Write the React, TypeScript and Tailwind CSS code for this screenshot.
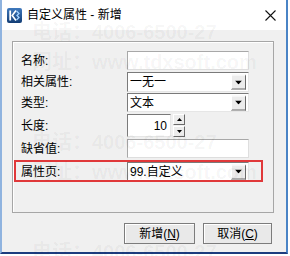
import React from "react";

const FONT = '"Liberation Sans", "Noto Sans CJK SC", sans-serif';

function DropBtn() {
  return (
    <div className="absolute right-[2px] top-1/2 -translate-y-1/2 w-[15px] h-[15px] bg-[#ececec] border border-t-white border-l-white border-b-[#6a6a6a] border-r-[#6a6a6a] flex items-center justify-center">
      <svg width="7" height="4" viewBox="0 0 7 4">
        <polygon points="0,0 7,0 3.5,4" fill="#000" />
      </svg>
    </div>
  );
}

function Combo({ text, className = "" }: { text: string; className?: string }) {
  return (
    <div
      className={
        "relative w-[122px] h-full bg-white border border-t-[#7a7a7a] border-l-[#7a7a7a] border-b-[#e6e6e6] border-r-[#e6e6e6] flex items-center pl-[2px] text-[12px] text-black " +
        className
      }
    >
      <span className="leading-none">{text}</span>
      <DropBtn />
    </div>
  );
}

function Input() {
  return (
    <div className="w-[122px] h-full bg-white border border-t-[#a8a8a8] border-l-[#a8a8a8] border-b-[#dedede] border-r-[#dedede]" />
  );
}

function Row({
  label,
  children,
  className = "",
}: {
  label: string;
  children: React.ReactNode;
  className?: string;
}) {
  return (
    <div className={"relative flex items-center " + className}>
      <div className="w-[106px] text-[12px] text-black leading-none">{label}</div>
      {children}
    </div>
  );
}

export default function App() {
  return (
    <div
      className="relative w-[290px] h-[256px] bg-white overflow-hidden"
      style={{ fontFamily: FONT }}
    >
      <div className="w-[288px] h-[254px] flex flex-col border-l-2 border-l-[#8fb3df] border-r-2 border-r-[#4a84c6] border-b-2 border-b-[#1c3c7e]">
        {/* title bar */}
        <div className="h-[30px] bg-white flex items-center pl-[5px] pr-[10px]">
          <svg width="15" height="15" viewBox="0 0 15 15">
            <defs>
              <linearGradient id="g" x1="0" y1="0" x2="0" y2="1">
                <stop offset="0" stopColor="#3f79bd" />
                <stop offset="1" stopColor="#123d75" />
              </linearGradient>
            </defs>
            <rect x="0" y="0" width="15" height="15" rx="2" fill="url(#g)" />
            <path d="M3.2 2.5 V12.5" stroke="#fff" strokeWidth="1.8" />
            <path d="M9 2.5 L5.2 7.5 L9 12.5" stroke="#fff" strokeWidth="1.6" fill="none" />
            <path d="M9.5 3 L12 5.5 L10 7.5 L12 9.5 L9.5 12" stroke="#9fd0ff" strokeWidth="1.3" fill="none" />
          </svg>
          <span className="ml-[5px] text-[12px] text-black leading-none">自定义属性 - 新增</span>
          <div className="flex-1" />
          <svg width="11" height="11" viewBox="0 0 11 11">
            <path d="M0.5 0.5 L10.5 10.5 M10.5 0.5 L0.5 10.5" stroke="#111" strokeWidth="1.1" />
          </svg>
        </div>
        {/* body */}
        <div className="flex-1 bg-[#f0f0f0] flex flex-col">
          <div className="ml-[10px] mt-[11px] w-[262px] h-[172px] border border-[#a6a6a6] shadow-[inset_1px_1px_0_#ffffff] flex flex-col pl-[8px]">
            <Row label="名称:" className="mt-[9px] h-[19px]">
              <Input />
            </Row>
            <Row label="相关属性:" className="mt-[2px] h-[20px]">
              <Combo text="一无一" />
            </Row>
            <Row label="类型:" className="mt-[1px] h-[19px]">
              <Combo text="文本" />
            </Row>
            <Row label="长度:" className="mt-[2px] h-[23px]">
              <div className="w-[44px] h-full bg-white border border-t-[#7a7a7a] border-l-[#7a7a7a] border-b-[#e6e6e6] border-r-[#e6e6e6] flex items-center justify-end pr-[3px] text-[12px] leading-none">
                10
              </div>
              <div className="ml-[2px] w-[12px] h-full flex flex-col gap-[1px]">
                <div className="flex-1 bg-[#ececec] border border-t-white border-l-white border-b-[#6a6a6a] border-r-[#6a6a6a] flex items-center justify-center">
                  <svg width="5" height="3" viewBox="0 0 5 3">
                    <polygon points="2.5,0 5,3 0,3" fill="#000" />
                  </svg>
                </div>
                <div className="flex-1 bg-[#ececec] border border-t-white border-l-white border-b-[#6a6a6a] border-r-[#6a6a6a] flex items-center justify-center">
                  <svg width="5" height="3" viewBox="0 0 5 3">
                    <polygon points="0,0 5,0 2.5,3" fill="#000" />
                  </svg>
                </div>
              </div>
            </Row>
            <Row label="缺省值:" className="mt-[2px] h-[19px]">
              <Input />
            </Row>
            <Row label="属性页:" className="mt-[4px] h-[19px]">
              <Combo text="99.自定义" />
              <div className="absolute left-[-7px] top-[-2px] w-[249px] h-[22px] border-2 border-[#e0383a] pointer-events-none" />
            </Row>
          </div>
          <div className="ml-[122px] mt-[10px] flex gap-[8px]">
            <div className="w-[71px] h-[21px] bg-[#e9e9e9] border border-[#7c7c7c] shadow-[inset_1px_1px_0_#ffffff] flex items-center justify-center text-[12px] leading-none text-black">
              新增(<span className="underline">N</span>)
            </div>
            <div className="w-[69px] h-[21px] bg-[#e9e9e9] border border-[#7c7c7c] shadow-[inset_1px_1px_0_#ffffff] flex items-center justify-center text-[12px] leading-none text-black">
              取消(<span className="underline">C</span>)
            </div>
          </div>
        </div>
      </div>
      {/* watermark */}
      <div className="pointer-events-none absolute inset-0 font-bold text-[20px] leading-[22px] text-[rgba(0,0,0,0.045)]">
        <div className="absolute left-[32px] top-[21px] whitespace-nowrap">电话：4006-6500-27</div>
        <div className="absolute left-[32px] top-[51px] whitespace-nowrap">网址：www.tdxsoft.com</div>
        <div className="absolute left-[32px] top-[131px] whitespace-nowrap">电话：4006-6500-27</div>
        <div className="absolute left-[32px] top-[161px] whitespace-nowrap">网址：www.tdxsoft.com</div>
        <div className="absolute left-[32px] top-[241px] whitespace-nowrap">电话：4006-6500-27</div>
      </div>
    </div>
  );
}
